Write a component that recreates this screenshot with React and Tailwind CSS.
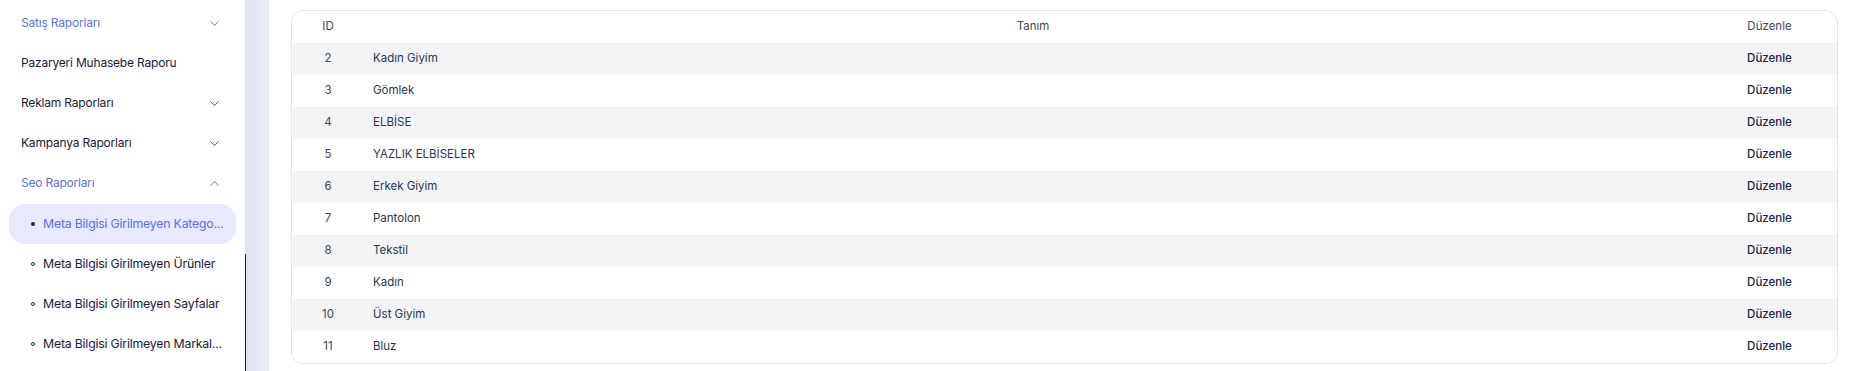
import React from "react";
import { ChevronDown, ChevronUp } from "lucide-react";

const menu = [
  { label: "Satış Raporları", blue: true, chevron: "down", chevBlue: true },
  { label: "Pazaryeri Muhasebe Raporu" },
  { label: "Reklam Raporları", chevron: "down" },
  { label: "Kampanya Raporları", chevron: "down" },
  { label: "Seo Raporları", blue: true, chevron: "up", chevBlue: true },
];

const sub = [
  { label: "Meta Bilgisi Girilmeyen Katego...", active: true },
  { label: "Meta Bilgisi Girilmeyen Ürünler" },
  { label: "Meta Bilgisi Girilmeyen Sayfalar" },
  { label: "Meta Bilgisi Girilmeyen Markal..." },
];

const rows = [
  [2, "Kadın Giyim"],
  [3, "Gömlek"],
  [4, "ELBİSE"],
  [5, "YAZLIK ELBİSELER"],
  [6, "Erkek Giyim"],
  [7, "Pantolon"],
  [8, "Tekstil"],
  [9, "Kadın"],
  [10, "Üst Giyim"],
  [11, "Bluz"],
];

export default function App() {
  return (
    <div
      className="flex h-[371px] w-[1856px] overflow-hidden bg-white"
      style={{ fontFamily: "Inter, 'Noto Sans', sans-serif" }}
    >
      <aside className="relative w-[245px] shrink-0 bg-white pt-[3px]">
        {menu.map((m) => (
          <div key={m.label} className="flex h-[40px] items-center justify-between pl-[21px] pr-[23px]">
            <span
              className={`text-[12px] tracking-[-0.2px] ${m.blue ? "text-[#5b6fe6]" : "text-[#161b3a]"}`}
            >
              {m.label}
            </span>
            {m.chevron === "down" && (
              <ChevronDown size={15} strokeWidth={1.5} className={m.chevBlue ? "text-[#5b6fe6]" : "text-[#3a3f5c]"} />
            )}
            {m.chevron === "up" && (
              <ChevronUp size={15} strokeWidth={1.5} className="text-[#5b6fe6]" />
            )}
          </div>
        ))}
        <div className="mt-[1px] flex flex-col">
          {sub.map((s) => (
            <div
              key={s.label}
              className={`mx-[9px] flex h-[40px] items-center gap-[8px] rounded-[16px] pl-[22px] ${s.active ? "bg-[#e7eafd]" : ""}`}
            >
              <span
                className={`h-[4px] w-[4px] rounded-full ${s.active ? "bg-[#1b2142]" : "border border-[#1b2142]"}`}
              />
              <span
                className={`whitespace-nowrap text-[12.3px] tracking-[-0.2px] ${s.active ? "text-[#5b6fe6]" : "text-[#161b3a]"}`}
              >
                {s.label}
              </span>
            </div>
          ))}
        </div>
        <div className="absolute bottom-0 right-[-1px] top-[254px] w-[1.5px] bg-[#1b2142]" />
      </aside>
      <div className="w-[24px] shrink-0 bg-gradient-to-r from-[#e1e4ef] via-[#e4e7f1] to-[#eceef5]" />
      <main className="flex-1 pl-[22px] pr-[18px] pt-[10px]">
        <div className="overflow-hidden rounded-[12px] border border-[#e2e4ea] bg-white">
          <table className="w-full table-fixed border-collapse text-[11.5px]">
            <colgroup>
              <col className="w-[72px]" />
              <col />
              <col className="w-[135px]" />
            </colgroup>
            <thead>
              <tr className="h-[32px]">
                <th className="text-center font-normal text-[#3f4656]">ID</th>
                <th className="text-center font-normal text-[#3f4656]">Tanım</th>
                <th className="text-center font-normal text-[#3f4656]">Düzenle</th>
              </tr>
            </thead>
            <tbody>
              {rows.map(([id, name], i) => (
                <tr key={id} className={`h-[32px] ${i % 2 === 0 ? "bg-[#f3f4f6]" : "bg-white"}`}>
                  <td className="text-center text-[#3f4656]">{id}</td>
                  <td className="pl-[9px] text-[#2b3350]">{name}</td>
                  <td className="text-center font-medium text-[#1b2142]">Düzenle</td>
                </tr>
              ))}
            </tbody>
          </table>
        </div>
      </main>
    </div>
  );
}
